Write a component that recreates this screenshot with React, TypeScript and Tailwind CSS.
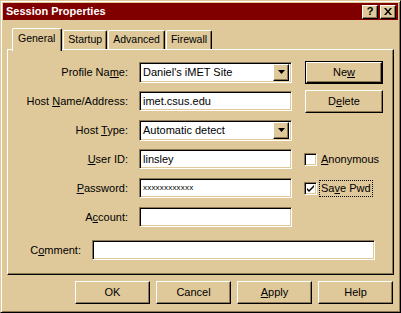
import type { ReactNode } from "react";

const face = "bg-[#dfc99a]";
const raised =
  "border border-t-white border-l-white border-r-black border-b-black shadow-[inset_-1px_-1px_0_#8c7853]";
const sunken =
  "border border-t-[#8c7853] border-l-[#8c7853] border-r-white border-b-white shadow-[inset_1px_1px_0_#000,inset_-1px_-1px_0_#dfc99a]";

function Label({ width, children }: { width: string; children: ReactNode }) {
  return <div className={`${width} shrink-0 text-right`}>{children}</div>;
}

function Edit({ value, className = "w-[153px]", small }: { value?: string; className?: string; small?: boolean }) {
  return (
    <div className={`${className} h-[20px] ${sunken} flex items-center bg-white px-[3px]`}>
      <span className={small ? "text-[8px] tracking-[0.2px]" : ""}>{value}</span>
    </div>
  );
}

function Combo({ value }: { value: string }) {
  return (
    <div className={`w-[153px] h-[21px] ${sunken} flex items-center bg-white pl-[3px] pr-[2px]`}>
      <span className="flex-1">{value}</span>
      <div className={`w-[16px] h-[17px] ${face} ${raised} flex items-center justify-center`}>
        <svg width="7" height="4" viewBox="0 0 7 4">
          <path d="M0 0h7L3.5 4z" fill="#000" />
        </svg>
      </div>
    </div>
  );
}

function Button({ children, width = "w-[75px]", isDefault }: { children: ReactNode; width?: string; isDefault?: boolean }) {
  const inner = (
    <div className={`${isDefault ? "w-full h-full" : `${width} h-[23px]`} ${face} ${raised} flex items-center justify-center`}>
      {children}
    </div>
  );
  if (!isDefault) return inner;
  return <div className={`${width} h-[23px] border border-black`}>{inner}</div>;
}

function Checkbox({ checked }: { checked?: boolean }) {
  return (
    <div className={`w-[13px] h-[13px] ${sunken} bg-white flex items-center justify-center`}>
      {checked && (
        <svg width="9" height="9" viewBox="0 0 9 9">
          <path d="M1 4l2 2 5-5v2l-5 5-2-2z" fill="#000" />
        </svg>
      )}
    </div>
  );
}

function Tab({ children, selected }: { children: ReactNode; selected?: boolean }) {
  if (selected) {
    return (
      <div
        className={`relative z-10 -mb-[2px] h-[23px] pl-[5px] pr-[6px] ${face} border-t border-l border-r border-t-white border-l-white border-r-black rounded-t-[2px] shadow-[inset_-1px_0_0_#8c7853] flex items-start pt-[4px]`}
      >
        {children}
      </div>
    );
  }
  return (
    <div
      className={`h-[19px] px-[4px] ${face} border-t border-l border-r border-t-white border-l-white border-r-black rounded-t-[2px] shadow-[inset_-1px_0_0_#8c7853] flex items-start pt-[3px]`}
    >
      {children}
    </div>
  );
}

export default function App() {
  return (
    <div
      className={`w-[401px] h-[313px] ${face} border border-t-[#dfc99a] border-l-[#dfc99a] border-r-black border-b-black shadow-[inset_1px_1px_0_#fff,inset_-1px_-1px_0_#8c7853] p-[2px] flex flex-col text-[11px] leading-none text-black overflow-hidden`}
      style={{ fontFamily: '"Liberation Sans", Arial, sans-serif' }}
    >
      <div className="h-[17px] shrink-0 bg-[#800000] flex items-center justify-between pl-[3px] pr-[2px]">
        <span className="text-white font-bold text-[11px]">Session Properties</span>
        <div className="flex gap-[2px]">
          <div className={`w-[16px] h-[14px] ${face} ${raised} flex items-center justify-center font-bold text-[11px]`}>?</div>
          <div className={`w-[16px] h-[14px] ${face} ${raised} flex items-center justify-center`}>
            <svg width="8" height="7" viewBox="0 0 8 7">
              <path d="M0 0h2l2 2.5L6 0h2L5 3.5 8 7H6L4 4.5 2 7H0l3-3.5z" fill="#000" />
            </svg>
          </div>
        </div>
      </div>

      <div className="flex flex-col px-[4px] pt-[6px]">
        <div className="flex items-end h-[23px] pl-[5px] gap-[1px] text-[10.5px]">
          <Tab selected>General</Tab>
          <Tab>Startup</Tab>
          <Tab>Advanced</Tab>
          <Tab>Firewall</Tab>
        </div>

        <div className="h-[226px] border border-t-white border-l-white border-r-black border-b-black shadow-[inset_-1px_-1px_0_#8c7853] flex flex-col pt-[12px] pl-[1px]">
          <div className="flex flex-col gap-[9px]">
            <div className="flex items-center h-[20px]">
              <Label width="w-[119px]">
                Profile Na<span className="underline">m</span>e:
              </Label>
              <div className="ml-[11px]">
                <Combo value="Daniel's iMET Site" />
              </div>
              <div className="ml-[13px]">
                <Button width="w-[78px]" isDefault>
                  Ne<span className="underline">w</span>
                </Button>
              </div>
            </div>
            <div className="flex items-center h-[20px]">
              <Label width="w-[119px]">
                Host <span className="underline">N</span>ame/Address:
              </Label>
              <div className="ml-[11px]">
                <Edit value="imet.csus.edu" />
              </div>
              <div className="ml-[13px]">
                <Button width="w-[78px]">
                  D<span className="underline">e</span>lete
                </Button>
              </div>
            </div>
            <div className="flex items-center h-[20px]">
              <Label width="w-[119px]">
                Host <span className="underline">T</span>ype:
              </Label>
              <div className="ml-[11px]">
                <Combo value="Automatic detect" />
              </div>
            </div>
            <div className="flex items-center h-[20px]">
              <Label width="w-[119px]">
                <span className="underline">U</span>ser ID:
              </Label>
              <div className="ml-[11px]">
                <Edit value="linsley" />
              </div>
              <div className="ml-[12px] flex items-center">
                <Checkbox />
                <span className="ml-[4px]">
                  <span className="underline">A</span>nonymous
                </span>
              </div>
            </div>
            <div className="flex items-center h-[20px]">
              <Label width="w-[119px]">
                <span className="underline">P</span>assword:
              </Label>
              <div className="ml-[11px]">
                <Edit value="xxxxxxxxxxxx" small />
              </div>
              <div className="ml-[12px] flex items-center">
                <Checkbox checked />
                <span className="ml-[3px] outline outline-1 outline-dotted outline-black px-[1px] py-[2px]">
                  Sa<span className="underline">v</span>e Pwd
                </span>
              </div>
            </div>
            <div className="flex items-center h-[20px]">
              <Label width="w-[119px]">
                A<span className="underline">c</span>count:
              </Label>
              <div className="ml-[11px]">
                <Edit />
              </div>
            </div>
          </div>
          <div className="flex items-center h-[20px] mt-[13px]">
            <Label width="w-[72px]">
              C<span className="underline">o</span>mment:
            </Label>
            <div className="ml-[11px]">
              <Edit className="w-[283px]" />
            </div>
          </div>
        </div>

        <div className="flex justify-end gap-[6px] mt-[6px] pr-[1px]">
          <Button>OK</Button>
          <Button>Cancel</Button>
          <Button>
            <span className="underline">A</span>pply
          </Button>
          <Button>Help</Button>
        </div>
      </div>
    </div>
  );
}
